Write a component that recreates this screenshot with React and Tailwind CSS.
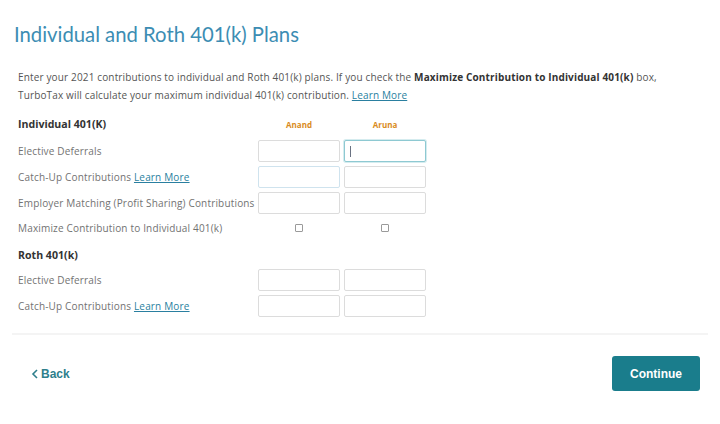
import { useState } from "react";

const font = { fontFamily: "'Open Sans', Lato, sans-serif" };

const inputBase =
  "w-[82px] h-[22px] rounded-[2px] border bg-white px-1 text-[10px] text-gray-700 outline-none";

const AmountInput = ({ focused, hint }) => (
  <div
    className={`${inputBase} flex items-center ${
      focused
        ? "border-[#8ec9d2] shadow-[0_0_0_1px_#d5ecef]"
        : hint
        ? "border-[#cfe3ee]"
        : "border-[#dcdcdc]"
    }`}
  >
    {focused && <span className="ml-[1px] h-[11px] w-[1px] bg-gray-500" />}
  </div>
);

const LearnMore = () => (
  <a href="#" className="text-[#2a7fa0] underline underline-offset-1">
    Learn More
  </a>
);

const Row = ({ label, children, h = "h-[26px]" }) => (
  <div className={`flex items-center ${h}`}>
    <div className="w-[240px] text-[10px] text-[#727272] whitespace-nowrap tracking-[0.17px]">
      {label}
    </div>
    <div className="flex gap-[4px]">{children}</div>
  </div>
);

export default function App() {
  const [maxAnand, setMaxAnand] = useState(false);
  const [maxAruna, setMaxAruna] = useState(false);

  return (
    <div className="w-[720px] h-[424px] bg-white overflow-hidden" style={font}>
      {/* Title */}
      <h1
        className="pl-[14px] pt-[22px] text-[20.3px] leading-[24px] text-[#3c8db3]"
        style={{ fontFamily: "Lato, 'Open Sans', sans-serif" }}
      >
        Individual and Roth 401(k) Plans
      </h1>

      {/* Intro */}
      <p className="mt-[22px] pl-[18px] pr-[20px] text-[10px] leading-[18px] text-[#555] whitespace-nowrap tracking-[0.15px]">
        Enter your 2021 contributions to individual and Roth 401(k) plans. If you
        check the{" "}
        <span className="font-bold text-[#333]">
          Maximize Contribution to Individual 401(k)
        </span>{" "}
        box,
        <br />
        TurboTax will calculate your maximum individual 401(k) contribution.{" "}
        <LearnMore />
      </p>

      {/* Individual 401(K) */}
      <div className="mt-[13px] pl-[18px]">
        <div className="flex items-center h-[16px]">
          <div className="w-[240px] text-[10.6px] font-bold text-[#333]">
            Individual 401(K)
          </div>
          <div className="flex gap-[4px] text-[8px] font-bold text-[#d98b22]">
            <div className="w-[82px] text-center">Anand</div>
            <div className="w-[82px] text-center">Aruna</div>
          </div>
        </div>

        <div className="mt-[5px]">
          <Row label="Elective Deferrals">
            <AmountInput />
            <AmountInput focused />
          </Row>
          <Row
            label={
              <>
                Catch-Up Contributions <LearnMore />
              </>
            }
          >
            <AmountInput hint />
            <AmountInput />
          </Row>
          <Row label="Employer Matching (Profit Sharing) Contributions">
            <AmountInput />
            <AmountInput />
          </Row>
          <Row label="Maximize Contribution to Individual 401(k)" h="h-[24px]">
            <div className="w-[82px] flex justify-center">
              <input
                type="checkbox"
                checked={maxAnand}
                onChange={() => setMaxAnand(!maxAnand)}
                className="appearance-none w-[8px] h-[8px] border border-[#9a9a9a] rounded-[1px] bg-white"
              />
            </div>
            <div className="w-[82px] flex justify-center">
              <input
                type="checkbox"
                checked={maxAruna}
                onChange={() => setMaxAruna(!maxAruna)}
                className="appearance-none w-[8px] h-[8px] border border-[#9a9a9a] rounded-[1px] bg-white"
              />
            </div>
          </Row>
        </div>

        {/* Roth 401(k) */}
        <div className="mt-[8px] h-[16px] flex items-center text-[10.6px] font-bold text-[#333]">
          Roth 401(k)
        </div>
        <div className="mt-[3px]">
          <Row label="Elective Deferrals">
            <AmountInput />
            <AmountInput />
          </Row>
          <Row
            label={
              <>
                Catch-Up Contributions <LearnMore />
              </>
            }
          >
            <AmountInput />
            <AmountInput />
          </Row>
        </div>
      </div>

      {/* Divider */}
      <div className="mt-[14px] mx-[12px] h-[2px] bg-[#f4f4f4]" />

      {/* Footer */}
      <div className="mt-[21px] flex items-center justify-between pl-[31px] pr-[20px]">
        <button
          className="flex items-center gap-[2px] text-[12px] font-bold text-[#2e7f8c]"
          style={{ fontFamily: "'Liberation Sans', Arial, sans-serif" }}
        >
          <svg width="8" height="10" viewBox="0 0 8 10" fill="none">
            <path d="M6 1L2 5l4 4" stroke="#2e7f8c" strokeWidth="1.6" />
          </svg>
          Back
        </button>
        <button
          className="w-[88px] h-[35px] rounded-[3px] bg-[#1a7d8c] text-white text-[12px] font-bold"
          style={{ fontFamily: "'Liberation Sans', Arial, sans-serif" }}
        >
          Continue
        </button>
      </div>
    </div>
  );
}
